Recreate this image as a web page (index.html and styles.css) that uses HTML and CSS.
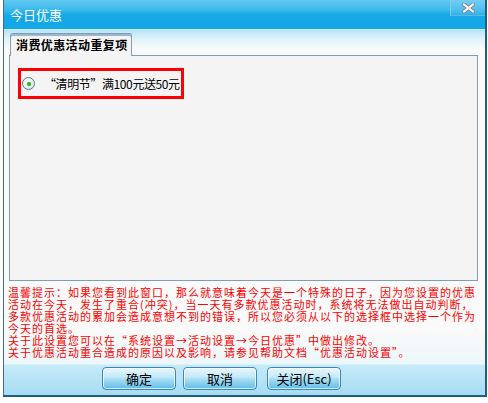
FILE: index.html
```html
<!DOCTYPE html>
<html lang="zh-CN">
<head>
    <meta charset="UTF-8">
    <title>今日优惠</title>
    <link rel="stylesheet" href="styles.css">
</head>
<body>
    <div class="window">
        <div class="titlebar">
            <span class="title">今日优惠</span>
            <div class="close-btn">
                <svg width="13" height="10" viewBox="0 0 13 10">
                    <path d="M2 1.5 L11 8.5 M11 1.5 L2 8.5" stroke="#7d8a92" stroke-width="4" stroke-linecap="square"/>
                    <path d="M2 1.5 L11 8.5 M11 1.5 L2 8.5" stroke="#f2f4f5" stroke-width="2" stroke-linecap="square"/>
                </svg>
            </div>
        </div>

        <div class="body">
            <div class="tabs">
                <div class="tab active">消费优惠活动重复项</div>
            </div>
            <div class="panel">
                <label class="option">
                    <span class="radio"><span class="dot"></span></span>
                    <span class="option-text">“清明节”满100元送50元</span>
                </label>
            </div>

            <div class="notice">
                温馨提示：如果您看到此窗口，那么就意味着今天是一个特殊的日子，因为您设置的优惠<br>
                活动在今天，发生了重合(冲突)，当一天有多款优惠活动时，系统将无法做出自动判断，<br>
                多款优惠活动的累加会造成意想不到的错误，所以您必须从以下的选择框中选择一个作为<br>
                今天的首选。<br>
                关于此设置您可以在“系统设置→活动设置→今日优惠”中做出修改。<br>
                关于优惠活动重合造成的原因以及影响，请参见帮助文档“优惠活动设置”。
            </div>

            <div class="footer">
                <button class="btn">确定</button>
                <button class="btn">取消</button>
                <button class="btn">关闭(Esc)</button>
            </div>
        </div>
    </div>
</body>
</html>
```

FILE: styles.css
```css
body {
    margin: 0;
    padding: 0;
    background: #ffffff;
    font-family: "Noto Sans CJK SC", "Noto Sans", sans-serif;
    font-size: 12px;
}
.window {
    margin-left: 3px;
    width: 481px;
    height: 395px;
    border-left: 1px solid #3f6f8c;
    border-right: 2px solid #1e5f80;
    border-bottom: 2px solid #1e5f80;
    display: flex;
    flex-direction: column;
}
.titlebar {
    height: 29px;
    flex: none;
    display: flex;
    justify-content: space-between;
    align-items: flex-start;
    background: linear-gradient(to bottom, #62c9f1 0px, #3bb8ec 10px, #15a9e6 15px, #12a7e5 29px);
    border-bottom: 1px solid #d6f0fa;
}
.title {
    color: #ffffff;
    font-size: 13px;
    line-height: 14px;
    margin: 8px 0 0 6px;
}
.close-btn {
    width: 34px;
    height: 15px;
    display: flex;
    justify-content: center;
    align-items: center;
    background: rgba(255, 255, 255, 0.1);
    border-left: 1px solid rgba(150, 200, 225, 0.9);
    border-bottom: 1px solid rgba(120, 190, 225, 0.6);
}
.body {
    flex: 1;
    display: flex;
    flex-direction: column;
    background: linear-gradient(to bottom, #b6e5f6 0px, #e3f4fa 10px, #f9faf9 20px, #f9faf9 300px, #ecf7fa 334px, #c6eaf8 335px, #a5dcf3 366px);
}
.tabs {
    display: flex;
    margin: 3px 0 0 6px;
    height: 22px;
}
.tab {
    width: 122px;
    height: 21px;
    border: 1px solid #7f9db9;
    border-bottom: none;
    border-radius: 3px 3px 0 0;
    background: #f4f4f4;
    font-weight: bold;
    font-size: 12px;
    letter-spacing: 0.4px;
    line-height: 22px;
    padding-left: 5px;
    box-sizing: border-box;
    position: relative;
    z-index: 1;
    margin-bottom: -1px;
    color: #000;
}
.tab.active {
    height: 23px;
    box-shadow: inset 0 2px 0 #9ab6cf;
}
.panel {
    margin-left: 5px;
    width: 467px;
    height: 224px;
    border: 1px solid #7f9db9;
    background: #f4f4f4;
}
.option {
    display: flex;
    align-items: center;
    margin: 12px 0 0 8px;
    width: 160px;
    height: 25px;
    border: 3px solid #ff0000;
    white-space: nowrap;
    overflow: hidden;
}
.radio {
    flex: none;
    width: 11px;
    height: 11px;
    border-radius: 50%;
    border: 1px solid #5b7d9a;
    background: radial-gradient(circle at 40% 40%, #ffffff 0%, #e6e6e0 70%, #cfd3d6 100%);
    display: flex;
    justify-content: center;
    align-items: center;
    margin-left: 1px;
}
.dot {
    width: 4px;
    height: 4px;
    border-radius: 50%;
    background: #2fb12f;
    box-shadow: 0 0 1px #6fd06f;
}
.option-text {
    margin-left: 9px;
    font-size: 12px;
    letter-spacing: -0.4px;
    color: #000;
}
.notice {
    margin: 5px 0 0 4px;
    color: #ff0000;
    font-size: 11px;
    letter-spacing: 1px;
    line-height: 12px;
    white-space: nowrap;
}
.footer {
    margin-top: auto;
    height: 31px;
    display: flex;
    align-items: flex-start;
    gap: 7px;
    padding-left: 98px;
    box-sizing: border-box;
    padding-top: 3px;
}
.btn {
    width: 74px;
    height: 23px;
    border: 1px solid #3f83b7;
    border-radius: 4px;
    background: linear-gradient(to bottom, #e6f6fd 0%, #c7ebfa 40%, #a5dcf4 55%, #5ebde9 100%);
    box-shadow: inset 0 0 0 1px rgba(255, 255, 255, 0.7);
    font-family: "Noto Sans CJK SC", sans-serif;
    font-size: 13px;
    color: #000;
    padding: 0;
    line-height: 20px;
}
.btn:nth-child(3) {
    margin-left: 3px;
}
```
